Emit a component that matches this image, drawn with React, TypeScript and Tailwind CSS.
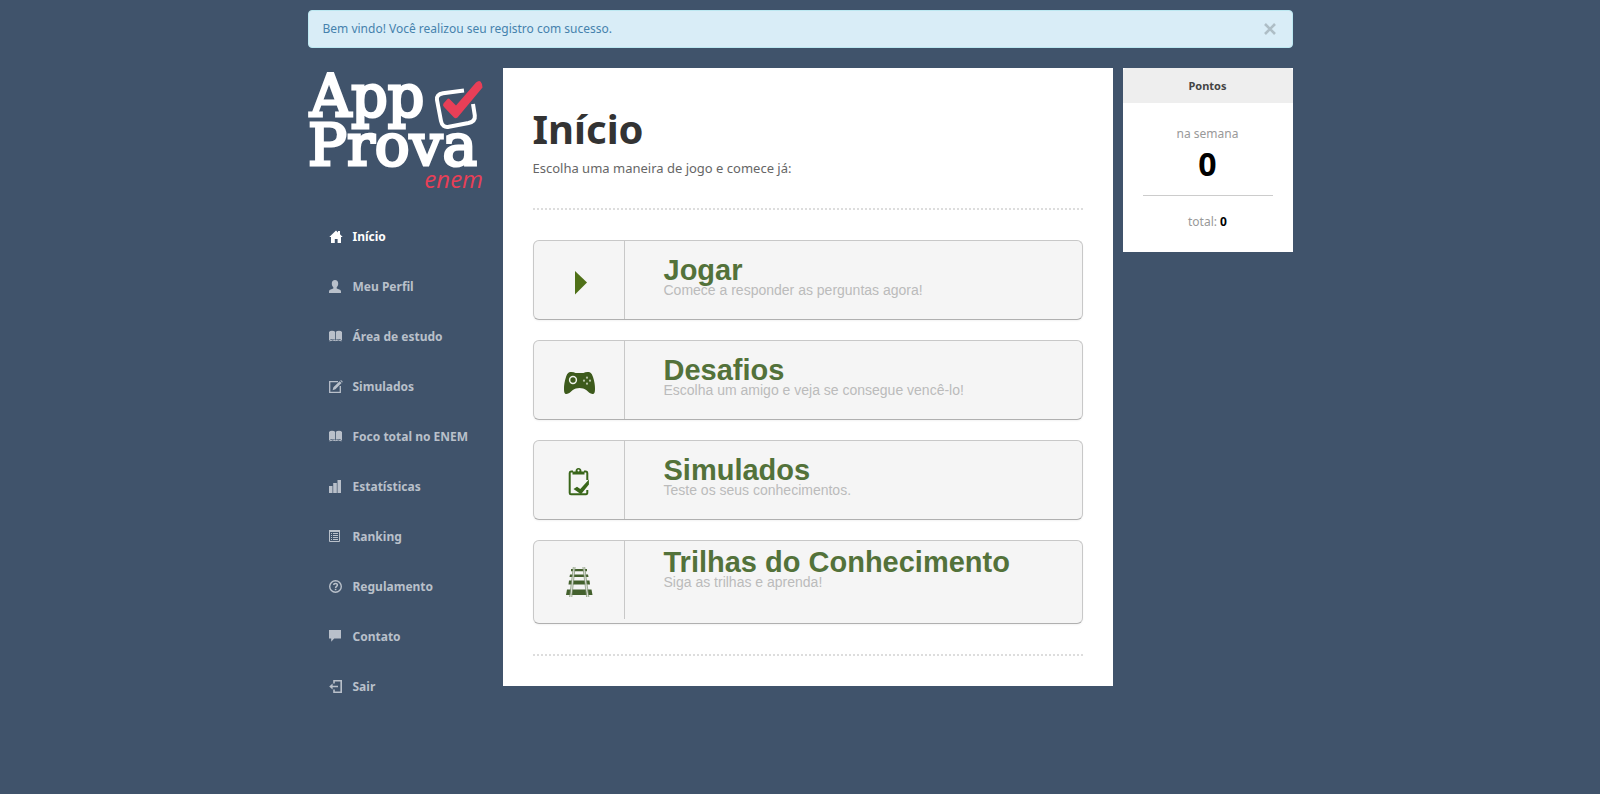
import { useState } from "react";
import type { ReactNode } from "react";

const navItems: { label: string; icon: ReactNode }[] = [
  {
    label: "Início",
    icon: <path d="M7 0.5 9 2.4V1h2v3.3L13.7 7H12v6H8.6V9H5.8v4H2V7H0.3Z" />,
  },
  {
    label: "Meu Perfil",
    icon: (
      <path d="M6 0C8 0 9.2 1.4 9.2 3.4 9.2 5 8.6 6.3 7.7 7.2V8.4L11 9.8Q12 10.3 12 11.5V13H0V11.5Q0 10.3 1 9.8L4.3 8.4V7.2C3.4 6.3 2.8 5 2.8 3.4 2.8 1.4 4 0 6 0Z" />
    ),
  },
  { label: "Área de estudo", icon: <BookShape /> },
  {
    label: "Simulados",
    icon: (
      <>
        <path d="M9 1.6H0.7V12.3H11.3V6" fill="none" stroke="currentColor" strokeWidth="1.3" />
        <path d="M3.6 10.2 4.4 7.3 10.6 1.2 12.6 3.1 6.4 9.3ZM11.2 0.6Q12 -0.2 13 0.7 14 1.7 13.2 2.5Z" />
      </>
    ),
  },
  { label: "Foco total no ENEM", icon: <BookShape /> },
  {
    label: "Estatísticas",
    icon: <path d="M0 6H3.5V13H0ZM4.2 3H7.8V13H4.2ZM8.5 0H12V13H8.5Z" />,
  },
  {
    label: "Ranking",
    icon: (
      <>
        <path d="M0.5 0.5H10.5V11.5H0.5Z" fill="none" stroke="currentColor" strokeWidth="1" />
        <path d="M0 0H11V2H0ZM2 3H3V4H2ZM4 3H9V4H4ZM2 5H3V6H2ZM4 5H9V6H4ZM2 7H3V8H2ZM4 7H9V8H4ZM2 9H3V10H2ZM4 9H9V10H4Z" />
      </>
    ),
  },
  {
    label: "Regulamento",
    icon: (
      <>
        <circle cx="6.5" cy="6.5" r="5.8" fill="none" stroke="currentColor" strokeWidth="1.4" />
        <path
          d="M4.7 5.1C4.7 3 8.4 3 8.4 5 8.4 6.4 6.6 6.3 6.6 8"
          fill="none"
          stroke="currentColor"
          strokeWidth="1.5"
        />
        <path d="M5.8 8.8H7.4V10.2H5.8Z" />
      </>
    ),
  },
  { label: "Contato", icon: <path d="M0 0H12V8.6H5.2L2.2 11.8V8.6H0Z" /> },
  {
    label: "Sair",
    icon: (
      <>
        <path d="M5 3.4V0.8H12.2V12.2H5V9.6" fill="none" stroke="currentColor" strokeWidth="1.6" />
        <path d="M0.2 6.5 3.6 3.5V5.8H9V7.2H3.6V9.5Z" />
      </>
    ),
  },
];

const modes = [
  { title: "Jogar", text: "Comece a responder as perguntas agora!", icon: <PlayIcon /> },
  { title: "Desafios", text: "Escolha um amigo e veja se consegue vencê-lo!", icon: <GamepadIcon /> },
  { title: "Simulados", text: "Teste os seus conhecimentos.", icon: <ClipboardIcon /> },
  { title: "Trilhas do Conhecimento", text: "Siga as trilhas e aprenda!", icon: <TrackIcon />, tall: true },
];

function BookShape() {
  return (
    <>
      <path d="M0 10.5V2Q1 0.7 3 0.7 5.2 0.7 6.1 1.8V9.7Q4.8 8.9 3 8.9 1.4 8.9 0 10.5ZM6.9 1.8Q7.8 0.7 10 0.7 12 0.7 13 2V10.5Q11.6 8.9 10 8.9 8.2 8.9 6.9 9.7Z" />
      <path d="M0.5 10.9Q3.5 9.4 6.5 10.6 9.5 9.4 12.5 10.9" fill="none" stroke="currentColor" strokeWidth="1" />
    </>
  );
}

function PlayIcon() {
  return (
    <svg className="h-10 w-10 fill-[#4f7017]" viewBox="0 0 40 40" aria-hidden="true">
      <path d="M16 9 28 20.500 16 32.500Z" />
    </svg>
  );
}

function GamepadIcon() {
  return (
    <svg className="h-10 w-10" viewBox="0 0 40 40" aria-hidden="true">
      <g transform="translate(1 1.5)">
        <path
          fill="#3d5a1c"
          d="M11.500 8.500Q14 8.500 15.500 9.600H23.500Q25 8.500 27.500 8.500C31 8.500 32 10.500 33 13.500 34.500 18 35 22 35 25 35 29 34.500 30.500 32.500 30.500 30 30.500 28.500 28.500 26.500 26.800 24.500 25.200 22 24.500 19.500 24.500S14.500 25.200 12.500 26.800C10.500 28.500 9 30.500 6.500 30.500 4.500 30.500 4 29 4 25 4 22 4.500 18 6 13.500 7 10.500 8 8.500 11.500 8.500Z"
        />
        <circle cx="13" cy="16.500" r="3.400" fill="none" stroke="#f0f3ec" strokeWidth="1.500" />
        <g fill="#b9c5ab">
          <circle cx="27" cy="14.200" r="1.100" />
          <circle cx="27" cy="20.200" r="1.100" />
          <circle cx="24" cy="17.200" r="1.100" />
          <circle cx="30" cy="17.200" r="1.100" />
        </g>
      </g>
    </svg>
  );
}

function ClipboardIcon() {
  return (
    <svg className="h-10 w-10" viewBox="0 0 40 40" aria-hidden="true">
      <g transform="translate(1 1)">
        <path
          d="M13 8.500H11Q9.700 8.500 9.700 10V30Q9.700 31.300 11 31.300H26Q27.300 31.300 27.300 29.500V27M24 8.500H26Q27.300 8.500 27.300 10V17"
          fill="none"
          stroke="#39661a"
          strokeWidth="2"
        />
        <path
          fill="#39661a"
          d="M12.500 11.500V8.500H15.500Q15.500 5 18.500 5T21.500 8.500H24.500V11.500ZM18.500 6.600A1 1 0 1 0 18.500 8.600 1 1 0 1 0 18.500 6.600Z"
        />
        <path fill="#39661a" d="M13.500 26 17 23.800 20.300 26 28.900 16.500V21.500L21 31.300Z" />
      </g>
    </svg>
  );
}

function TrackIcon() {
  return (
    <svg className="h-10 w-10" viewBox="0 0 40 40" aria-hidden="true">
      <path
        fill="#43602d"
        d="M12 7H28V9.300H12ZM11 12.500H29L29.500 15H10.500ZM10 18.500H30.500L31 22.500H9.500ZM8 27.500H32.500L33.500 33H7Z"
      />
      <path d="M15.200 5 11.700 35M24.800 5 28.700 35" stroke="#dce1d8" strokeWidth="1.600" fill="none" />
      <path
        d="M14.300 5 10.600 35M16.100 5 12.800 35M23.900 5 27.600 35M25.700 5 29.800 35"
        stroke="#7c8f70"
        strokeWidth="0.700"
        fill="none"
      />
    </svg>
  );
}

function Logo() {
  return (
    <a href="#inicio" className="block">
      <svg className="h-32 w-44 overflow-visible" viewBox="0 0 176 128" role="img" aria-label="App Prova enem">
        <g
          fill="#fff"
          stroke="#fff"
          strokeWidth="3"
          fontFamily="'DejaVu Serif', serif"
        >
          <text x="2" y="48" fontSize="57">App</text>
          <text x="0" y="97" fontSize="58">Prova</text>
        </g>
        <path
          d="M156 22.500 135 25.300Q128 26.500 129 32L133 53Q134.300 60 141 58.700L160.500 55Q167.500 53.500 166.800 47.500L165 36"
          fill="none"
          stroke="#fff"
          strokeWidth="4"
        />
        <path
          fill="#e83f57"
          d="M135.500 35.500 139.500 31Q140.500 30 141.500 31L148 37.500 168 14.500Q170.800 12 172.500 13.500T174.500 19.500L149.500 49.500Q147.500 51 146 49.500L136 39Q134.200 37 135.500 35.500Z"
        />
        <text
          x="175"
          y="120"
          textAnchor="end"
          fill="#e83f57"
          fontFamily="'Open Sans', sans-serif"
          fontStyle="italic"
          fontSize="24"
        >
          enem
        </text>
      </svg>
    </a>
  );
}

export default function App() {
  const [alertOpen, setAlertOpen] = useState(true);

  return (
    <div className="min-h-screen bg-[#40536b] px-4 pt-[10px] pb-16 font-['Noto_Sans',sans-serif]">
      <div className="mx-auto max-w-[985px]">
        {alertOpen && (
          <div
            role="alert"
            className="mb-5 flex items-center justify-between rounded border border-[#bce8f1] bg-[#d9edf7] px-[14px] py-2 text-xs leading-5 text-[#4682ad]"
          >
            <span>Bem vindo! Você realizou seu registro com sucesso.</span>
            <button type="button" aria-label="Fechar" onClick={() => setAlertOpen(false)} className="px-[2px] text-[#aebec6]">
              <svg className="h-3 w-3" viewBox="0 0 12 12" aria-hidden="true">
                <path d="M1 1 11 11M11 1 1 11" stroke="currentColor" strokeWidth="2.600" />
              </svg>
            </button>
          </div>
        )}

        <div className="flex flex-wrap items-start md:flex-nowrap">
          <aside className="w-[195px] shrink-0">
            <Logo />
            <nav className="mt-4" aria-label="Principal">
              <ul>
                {navItems.map((item, i) => (
                  <li key={item.label}>
                    <a
                      href="#inicio"
                      className={`flex h-[50px] items-center gap-[10px] pl-[21px] text-xs font-bold ${
                        i === 0 ? "text-white" : "text-[#b9c0ca]"
                      }`}
                    >
                      <svg className="h-[14px] w-[14px] fill-current" viewBox="0 0 14 14" aria-hidden="true">
                        {item.icon}
                      </svg>
                      {item.label}
                    </a>
                  </li>
                ))}
              </ul>
            </nav>
          </aside>

          <main className="min-w-0 flex-1 bg-white px-[30px] pt-[36px] pb-[30px]">
            <h1 className="text-[40px] leading-[50px] font-bold text-[#333]">Início</h1>
            <p className="mt-1 text-[13px] leading-5 text-[#666]">Escolha uma maneira de jogo e comece já:</p>
            <div className="my-[30px] border-t-2 border-dotted border-[#ddd]" />
            <div className="flex flex-col gap-5 font-['Liberation_Sans',sans-serif]">
              {modes.map((mode) => (
                <a
                  key={mode.title}
                  href="#inicio"
                  className={`flex items-start rounded-md border border-[#c8c8c8] border-b-[#b0b0b0] bg-[#f5f5f5] shadow-[0_1px_2px_rgba(0,0,0,0.05)] ${
                    mode.tall ? "pb-1" : ""
                  }`}
                >
                  <span className="flex h-[78px] w-[91px] shrink-0 items-center justify-center border-r border-[#c8c8c8] pt-1">
                    {mode.icon}
                  </span>
                  <span className={`block pl-[39px] ${mode.tall ? "pt-[11px]" : "pt-[19px]"}`}>
                    <strong className="block text-[29px] leading-5 font-bold text-[#53723a]">{mode.title}</strong>
                    <span className="block text-sm leading-5 text-[#bbb]">{mode.text}</span>
                  </span>
                </a>
              ))}
            </div>
            <div className="mt-[30px] border-t-2 border-dotted border-[#ddd]" />
          </main>

          <aside className="ml-[10px] w-[170px] shrink-0 bg-white text-center">
            <h2 className="rounded-t bg-[#eee] py-2 text-[11px] leading-[19px] font-bold text-[#444]">Pontos</h2>
            <div className="px-5 pt-[21px] pb-5">
              <p className="text-xs leading-5 text-[#999]">na semana</p>
              <p className="py-1 text-[32px] leading-8 font-bold text-black">0</p>
              <div className="mt-[11px] border-t border-[#ccc]" />
              <p className="mt-4 text-xs leading-5 text-[#999]">
                total: <strong className="text-black">0</strong>
              </p>
            </div>
          </aside>
        </div>
      </div>
    </div>
  );
}
